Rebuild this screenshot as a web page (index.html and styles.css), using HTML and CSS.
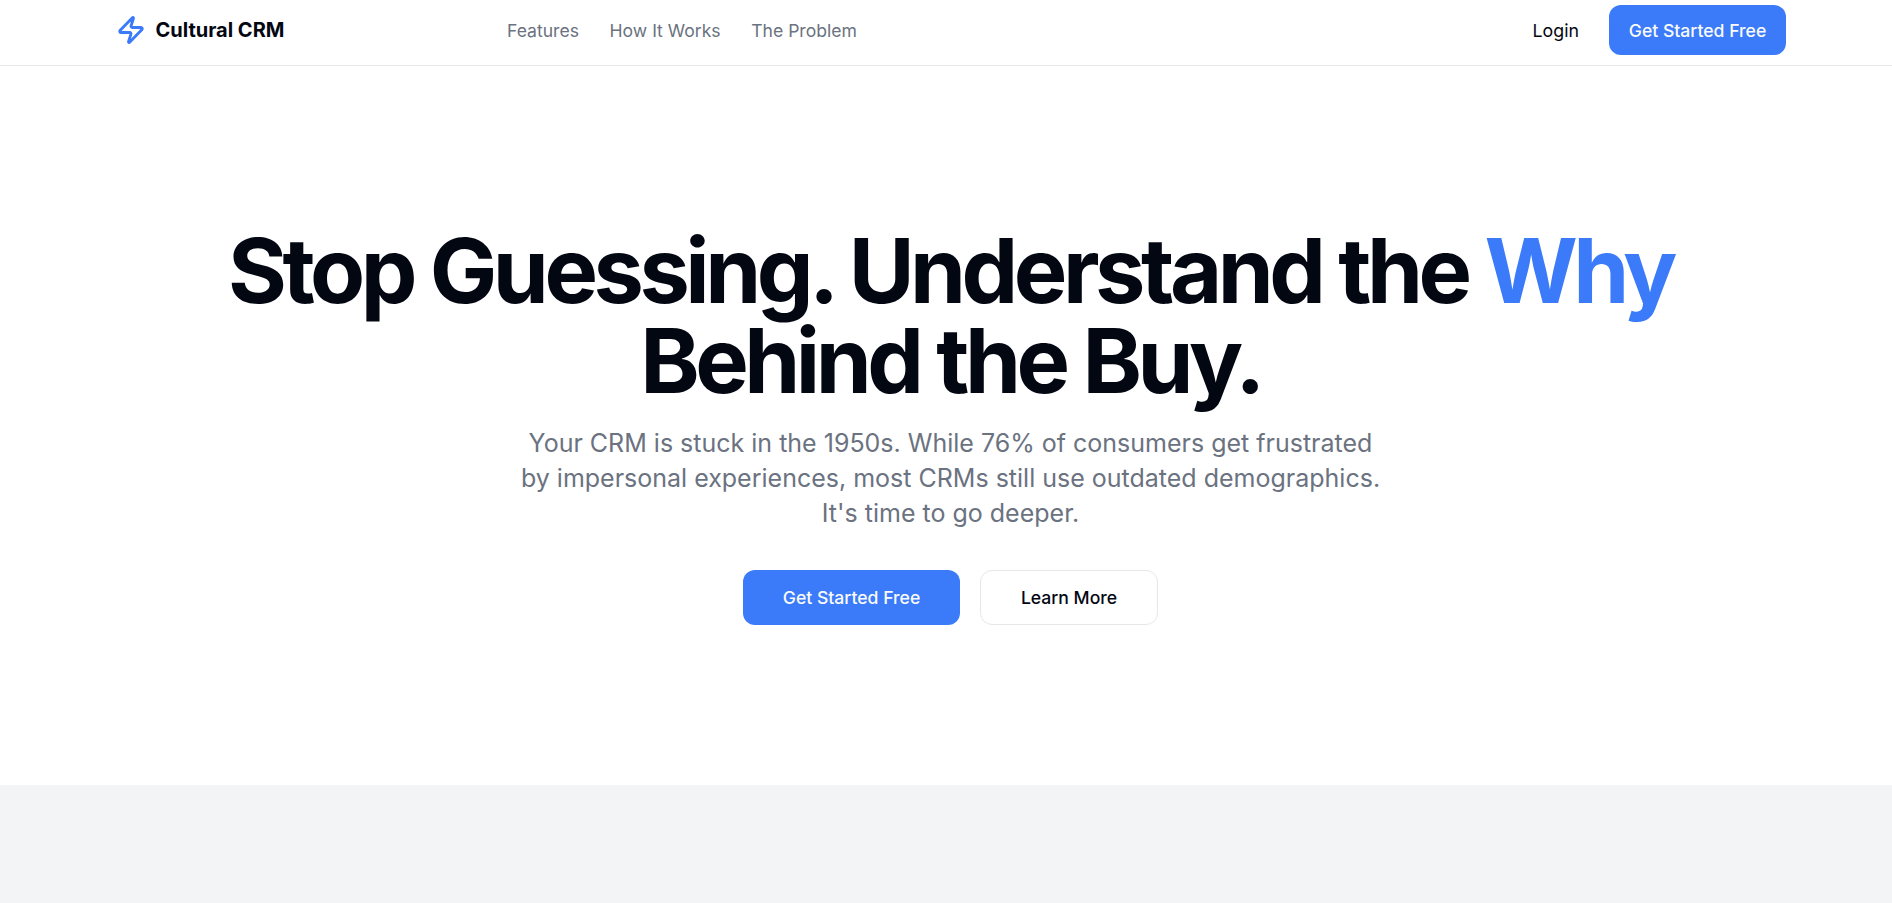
FILE: index.html
```html
<!DOCTYPE html>
<html lang="en">

<head>
    <meta charset="UTF-8">
    <meta name="viewport" content="width=device-width, initial-scale=1.0">
    <title>Cultural CRM</title>
    <link rel="stylesheet" href="styles.css">
</head>

<body>
    <header class="navbar">
        <a class="brand" href="#">
            <svg class="brand-icon" viewBox="0 0 24 24" fill="none" stroke="currentColor" stroke-width="2.3" stroke-linecap="round" stroke-linejoin="round">
                <path d="M4 14a1 1 0 0 1-.78-1.63l9.9-10.2a.5.5 0 0 1 .86.46l-1.92 6.02A1 1 0 0 0 13 10h7a1 1 0 0 1 .78 1.63l-9.9 10.2a.5.5 0 0 1-.86-.46l1.92-6.02A1 1 0 0 0 11 14z"></path>
            </svg>
            <span>Cultural CRM</span>
        </a>
        <nav class="nav-links">
            <a href="#">Features</a>
            <a href="#">How It Works</a>
            <a href="#">The Problem</a>
        </nav>
        <div class="nav-actions">
            <a class="login" href="#">Login</a>
            <a class="btn btn-primary btn-small" href="#">Get Started Free</a>
        </div>
    </header>

    <main>
        <section class="hero">
            <h1>Stop Guessing. Understand the <span class="accent">Why</span> Behind the Buy.</h1>
            <p>Your CRM is stuck in the 1950s. While 76% of consumers get frustrated by impersonal experiences, most CRMs still use outdated demographics. It's time to go deeper.</p>
            <div class="hero-actions">
                <a class="btn btn-primary" href="#">Get Started Free</a>
                <a class="btn btn-outline" href="#">Learn More</a>
            </div>
        </section>
        <section class="next-section"></section>
    </main>
</body>

</html>
```

FILE: styles.css
```css
* {
    box-sizing: border-box;
}

body {
    font-family: Inter, "Noto Sans", sans-serif;
    margin: 0;
    background-color: white;
    color: #030712;
}

a {
    text-decoration: none;
    color: inherit;
}

.navbar {
    display: flex;
    align-items: center;
    height: 66px;
    padding: 0 106px 5px 116px;
    border-bottom: 1px solid #e5e7eb;
}

.brand {
    display: flex;
    align-items: center;
    gap: 9.5px;
    font-size: 20px;
    font-weight: 700;
}

.brand-icon {
    width: 30px;
    height: 30px;
    color: #3b7bfa;
}

.nav-links {
    display: flex;
    gap: 30.5px;
    margin-left: 222.5px;
    font-size: 17.6px;
    font-weight: 400;
    color: #6b7280;
}

.nav-actions {
    display: flex;
    align-items: center;
    gap: 30px;
    margin-left: auto;
    font-size: 17.8px;
    font-weight: 400;
}

.btn {
    display: flex;
    align-items: center;
    justify-content: center;
    height: 55px;
    border-radius: 12px;
    font-size: 17.6px;
    font-weight: 500;
}

.btn-primary {
    width: 217px;
    background-color: #3b7bfa;
    color: #f9fafb;
}

.btn-small {
    width: 177px;
    height: 50px;
}

.btn-outline {
    width: 178px;
    border: 1px solid #e5e7eb;
}

.hero {
    display: flex;
    flex-direction: column;
    align-items: center;
    height: 719px;
    padding: 160px 106px 0 115px;
    text-align: center;
}

.hero h1 {
    width: 1600px;
    margin: 0;
    font-size: 90px;
    line-height: 90px;
    font-weight: 700;
    letter-spacing: -0.05em;
}

.accent {
    color: #3b7bfa;
}

.hero p {
    width: 870px;
    margin: 20px 0 0;
    font-size: 25px;
    line-height: 35px;
    color: #6b7280;
}

.hero-actions {
    display: flex;
    gap: 20px;
    margin-top: 39px;
}

.next-section {
    height: 118px;
    background-color: #f3f4f6;
}
```
